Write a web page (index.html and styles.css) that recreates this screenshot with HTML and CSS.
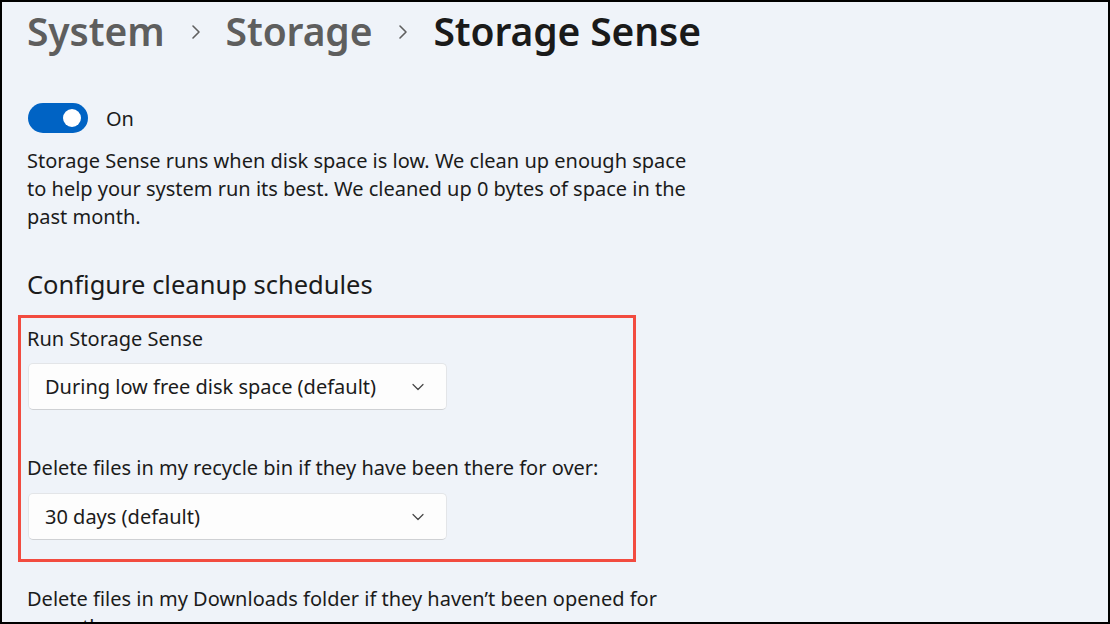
FILE: index.html
```html
<!DOCTYPE html>
<html lang="en">
<head>
<meta charset="utf-8">
<title>Storage Sense</title>
<link rel="stylesheet" href="styles.css">
</head>
<body>
<div class="frame">
  <header class="crumbs">
    <span class="crumb">System</span>
    <svg class="sep" viewBox="0 0 10 16" width="10" height="16"><path d="M2 2 L8 8 L2 14" fill="none" stroke="#5f5f5f" stroke-width="1.6" stroke-linecap="round" stroke-linejoin="round"/></svg>
    <span class="crumb">Storage</span>
    <svg class="sep" viewBox="0 0 10 16" width="10" height="16"><path d="M2 2 L8 8 L2 14" fill="none" stroke="#5f5f5f" stroke-width="1.6" stroke-linecap="round" stroke-linejoin="round"/></svg>
    <span class="crumb current">Storage Sense</span>
  </header>

  <div class="toggle-row">
    <span class="toggle"><span class="knob"></span></span>
    <span class="toggle-label">On</span>
  </div>

  <p class="desc">Storage Sense runs when disk space is low. We clean up enough space to help your system run its best. We cleaned up 0 bytes of space in the past month.</p>

  <h2 class="section">Configure cleanup schedules</h2>

  <div class="highlight">
    <div class="field">
      <div class="label">Run Storage Sense</div>
      <div class="select">
        <span>During low free disk space (default)</span>
        <svg class="chev" viewBox="0 0 12 8" width="12" height="8"><path d="M1 1.5 L6 6.5 L11 1.5" fill="none" stroke="#444" stroke-width="1.2" stroke-linecap="round" stroke-linejoin="round"/></svg>
      </div>
    </div>
    <div class="field">
      <div class="label">Delete files in my recycle bin if they have been there for over:</div>
      <div class="select">
        <span>30 days (default)</span>
        <svg class="chev" viewBox="0 0 12 8" width="12" height="8"><path d="M1 1.5 L6 6.5 L11 1.5" fill="none" stroke="#444" stroke-width="1.2" stroke-linecap="round" stroke-linejoin="round"/></svg>
      </div>
    </div>
  </div>

  <p class="desc after">Delete files in my Downloads folder if they haven’t been opened for more than:</p>
</div>
</body>
</html>
```
FILE: styles.css
```css
html, body {
  margin: 0;
  padding: 0;
  background: #000;
}
.frame {
  box-sizing: border-box;
  width: 1110px;
  height: 624px;
  overflow: hidden;
  border: 2px solid #000;
  background: #eff3f9;
  padding: 5px 0 0 25px;
  font-family: "Noto Sans", "Open Sans", sans-serif;
  color: #1b1b1b;
}
.crumbs {
  display: flex;
  align-items: center;
  height: 46px;
}
.crumb {
  font-size: 39px;
  font-weight: 600;
  color: #5e5e5e;
  letter-spacing: -0.1px;
}
.crumb.current { color: #1a1a1a; }
.sep {
  margin: 4px 25px 0 26px;
}
.toggle-row {
  display: flex;
  align-items: center;
  margin-top: 50px;
  height: 30px;
}
.toggle {
  box-sizing: border-box;
  width: 60px;
  height: 30px;
  border-radius: 15px;
  background: #0063c4;
  display: flex;
  align-items: center;
  justify-content: flex-end;
  padding-right: 7px;
  margin-left: 1px;
}
.knob {
  width: 18px;
  height: 18px;
  border-radius: 50%;
  background: #fff;
}
.toggle-label {
  margin-left: 18px;
  font-size: 20px;
}
.desc {
  margin: 14px 0 0 0;
  width: 660px;
  font-size: 20px;
  line-height: 28px;
}
.section {
  margin: 35px 0 0 0;
  font-size: 25.5px;
  font-weight: 400;
  line-height: 36px;
}
.highlight {
  box-sizing: border-box;
  width: 618px;
  margin: 13px 0 0 -9px;
  border: 3px solid #f24b40;
  padding: 7px 0 19px 6px;
}
.field + .field { margin-top: 44px; }
.field + .field .select { margin-top: 11px; }
.label {
  font-size: 20px;
  line-height: 28px;
}
.select {
  box-sizing: border-box;
  margin-top: 10px;
  margin-left: 1px;
  width: 419px;
  height: 47px;
  background: #fdfdfd;
  border: 1px solid #e3e5e8;
  border-bottom-color: #cfd1d4;
  border-radius: 5px;
  display: flex;
  align-items: center;
  justify-content: space-between;
  padding: 0 22px 0 16px;
  font-size: 20px;
}
.chev { margin-top: 1px; }
.desc.after { margin-top: 23px; }
```
